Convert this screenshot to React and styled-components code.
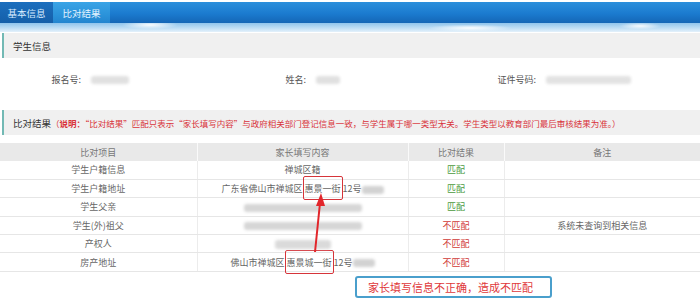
import React from "react";
import styled, { createGlobalStyle } from "styled-components";

const GlobalStyle = createGlobalStyle`
  html, body { margin: 0; padding: 0; background: #fff; }
  body { font-family: "Noto Sans CJK SC", "Noto Sans", sans-serif; }
  * { box-sizing: border-box; }
`;

const Page = styled.div`
  width: 700px;
  height: 301px;
  padding-top: 2px;
  overflow: hidden;
  background: #fff;
`;

const TabBar = styled.div`
  display: flex;
  height: 21px;
  background: linear-gradient(180deg, #2b8fdc 0%, #1b7bcf 55%, #1466b6 100%);
`;

const Tab = styled.div`
  display: flex;
  align-items: center;
  justify-content: center;
  width: ${(p) => p.$w}px;
  height: 100%;
  font-size: 9.5px;
  color: ${(p) => (p.$active ? "#e6f4ff" : "#d8ecff")};
  background: ${(p) =>
    p.$active
      ? "linear-gradient(180deg, #3aa4e6 0%, #2b93da 60%, #2385cf 100%)"
      : "linear-gradient(180deg, #1c6fbe 0%, #155fa9 100%)"};
`;

const CloudBand = styled.div`
  height: 9px;
  margin-bottom: 1px;
  background:
    radial-gradient(ellipse 40px 6px at 150px 2px, rgba(255,255,255,0.95), rgba(255,255,255,0) 70%),
    radial-gradient(ellipse 60px 5px at 470px 5px, rgba(255,255,255,0.95), rgba(255,255,255,0) 70%),
    radial-gradient(ellipse 30px 5px at 640px 3px, rgba(255,255,255,0.9), rgba(255,255,255,0) 70%),
    linear-gradient(180deg, #8fc4ec 0%, #b9dbf4 50%, #e4f1fb 100%);
`;

const SectionHeader = styled.div`
  display: flex;
  align-items: center;
  height: 25px;
  margin: ${(p) => p.$mt || 0}px 0 0 2px;
  padding-left: 9px;
  background: #f0f0f0;
  border-left: 2px solid #72b9b4;
  font-size: 9.5px;
  color: #333;
  white-space: nowrap;
`;

const Note = styled.span`
  color: #d9333a;
  font-size: 8.5px;
  b { font-weight: 700; }
`;

const InfoGrid = styled.div`
  display: grid;
  grid-template-columns: 85px 140px 85px 145px 85px 160px;
  align-items: center;
  height: 42px;
  font-size: 9px;
  color: #555;
`;

const InfoLabel = styled.div`
  text-align: right;
  padding-right: 4px;
`;

const InfoValue = styled.div`
  padding-left: ${(p) => p.$pl || 4}px;
`;

const Blur = styled.span`
  display: inline-block;
  vertical-align: middle;
  width: ${(p) => p.$w}px;
  height: ${(p) => p.$h || 8}px;
  border-radius: 3px;
  background: ${(p) => p.$c || "#d2d2d2"};
  filter: blur(1.6px);
`;

const TableWrap = styled.div`
  position: relative;
  margin-top: 8px;
`;

const Table = styled.table`
  width: 700px;
  border-collapse: collapse;
  table-layout: fixed;
  font-size: 9px;
  color: #666;
`;

const Th = styled.th`
  height: 18px;
  padding: 0;
  font-weight: 400;
  color: #777;
  background: #e9e9e9;
  border-left: 1px solid #fafafa;
  &:first-child { border-left: none; }
`;

const Td = styled.td`
  height: 18.4px;
  padding: 0;
  text-align: center;
  white-space: nowrap;
  border-bottom: 1px solid #e6e6e6;
  border-left: 1px solid #ececec;
  &:first-child { border-left: none; }
`;

const Result = styled.span`
  color: ${(p) => (p.$ok ? "#4b9a3c" : "#d03a36")};
`;

const Marked = styled.span`
  padding: 5px 1px 4px;
  border: 1.5px solid #d6343a;
  border-radius: 2px;
`;

const ArrowLayer = styled.svg`
  position: absolute;
  left: 0;
  top: 0;
  pointer-events: none;
`;

const Callout = styled.div`
  display: flex;
  align-items: center;
  width: 197px;
  height: 22px;
  margin: 4px 0 0 355px;
  padding-left: 11px;
  border: 2px solid #4a9fcc;
  border-radius: 3px;
  background: #fff;
  font-size: 11px;
  color: #e0383a;
  white-space: nowrap;
`;

const rows = [
  { item: "学生户籍信息", content: <>禅城区籍</>, ok: true },
  {
    item: "学生户籍地址",
    content: (
      <>
        广东省佛山市禅城区<Marked>惠景一街</Marked>12号<Blur $w={22} />
      </>
    ),
    ok: true,
  },
  { item: "学生父亲", content: <Blur $w={118} $c="#d6d6d6" />, ok: true },
  {
    item: "学生(外)祖父",
    content: <Blur $w={118} $c="#d6d6d6" />,
    ok: false,
    note: "系统未查询到相关信息",
  },
  { item: "产权人", content: <Blur $w={56} $h={9} $c="#dadada" />, ok: false },
  {
    item: "房产地址",
    content: (
      <>
        佛山市禅城区<Marked>惠景城一街</Marked>12号<Blur $w={22} />
      </>
    ),
    ok: false,
  },
];

export default function App() {
  return (
    <>
      <GlobalStyle />
      <Page>
        <TabBar>
          <Tab $w={53}>基本信息</Tab>
          <Tab $w={57} $active>比对结果</Tab>
        </TabBar>
        <CloudBand />
        <SectionHeader>学生信息</SectionHeader>
        <InfoGrid>
          <InfoLabel>报名号:</InfoLabel>
          <InfoValue $pl={6}><Blur $w={38} $c="#e0e0e0" /></InfoValue>
          <InfoLabel>姓名:</InfoLabel>
          <InfoValue $pl={6}><Blur $w={24} $c="#e0e0e0" /></InfoValue>
          <InfoLabel>证件号码:</InfoLabel>
          <InfoValue $pl={6}><Blur $w={85} $c="#e2e2e2" /></InfoValue>
        </InfoGrid>
        <SectionHeader $mt={10}>
          比对结果
          <Note>
            （<b>说明：</b>“比对结果”匹配只表示“家长填写内容”与政府相关部门登记信息一致，与学生属于哪一类型无关。学生类型以教育部门最后审核结果为准。）
          </Note>
        </SectionHeader>
        <TableWrap>
          <Table>
            <colgroup>
              <col style={{ width: 197 }} />
              <col style={{ width: 211 }} />
              <col style={{ width: 96 }} />
              <col style={{ width: 196 }} />
            </colgroup>
            <thead>
              <tr>
                <Th>比对项目</Th>
                <Th>家长填写内容</Th>
                <Th>比对结果</Th>
                <Th>备注</Th>
              </tr>
            </thead>
            <tbody>
              {rows.map((r) => (
                <tr key={r.item}>
                  <Td>{r.item}</Td>
                  <Td>{r.content}</Td>
                  <Td>
                    <Result $ok={r.ok}>{r.ok ? "匹配" : "不匹配"}</Result>
                  </Td>
                  <Td>{r.note || ""}</Td>
                </tr>
              ))}
            </tbody>
          </Table>
          <ArrowLayer width="700" height="130" viewBox="0 0 700 130">
            <line x1="315" y1="109" x2="320" y2="60" stroke="#e2262b" strokeWidth="2" />
            <polygon points="321,50 316,63 325,63" fill="#e2262b" />
          </ArrowLayer>
        </TableWrap>
        <Callout>家长填写信息不正确，造成不匹配</Callout>
      </Page>
    </>
  );
}
